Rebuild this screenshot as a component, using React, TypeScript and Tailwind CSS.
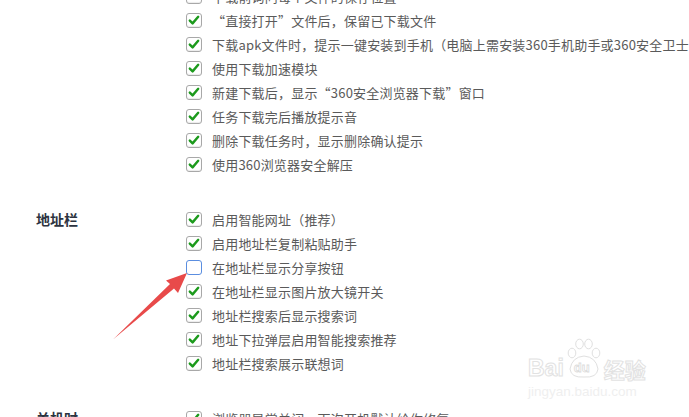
import React from "react";

type Section = {
  title: string;
  options: { label: string; checked: boolean; focus?: boolean }[];
};

const sections: Section[] = [
  {
    title: "",
    options: [
      { label: "下载前询问每个文件的保存位置", checked: false },
      { label: "“直接打开”文件后，保留已下载文件", checked: true },
      {
        label: "下载apk文件时，提示一键安装到手机（电脑上需安装360手机助手或360安全卫士）",
        checked: true,
      },
      { label: "使用下载加速模块", checked: true },
      { label: "新建下载后，显示“360安全浏览器下载”窗口", checked: true },
      { label: "任务下载完后播放提示音", checked: true },
      { label: "删除下载任务时，显示删除确认提示", checked: true },
      { label: "使用360浏览器安全解压", checked: true },
    ],
  },
  {
    title: "地址栏",
    options: [
      { label: "启用智能网址（推荐）", checked: true },
      { label: "启用地址栏复制粘贴助手", checked: true },
      { label: "在地址栏显示分享按钮", checked: false, focus: true },
      { label: "在地址栏显示图片放大镜开关", checked: true },
      { label: "地址栏搜索后显示搜索词", checked: true },
      { label: "地址下拉弹层启用智能搜索推荐", checked: true },
      { label: "地址栏搜索展示联想词", checked: true },
    ],
  },
  {
    title: "关机时",
    options: [{ label: "浏览器异常关闭，下次开机默认给你修复", checked: true }],
  },
];

const CheckBox = ({ checked, focus }: { checked: boolean; focus?: boolean }) => (
  <div
    className={`w-[16px] h-[15px] shrink-0 rounded-[3px] bg-white flex items-center justify-center ${
      focus
        ? "border-[1.5px] border-[#5b8ee0]"
        : "border border-[#a8a8a8] shadow-[inset_0_-1px_1px_rgba(0,0,0,0.08)]"
    }`}
  >
    {checked && (
      <svg width="12" height="11" viewBox="0 0 12 11">
        <path
          d="M1.8 5.6 L4.6 8.4 L10.2 1.8"
          fill="none"
          stroke="#1c9a1c"
          strokeWidth="2.4"
          strokeLinecap="round"
          strokeLinejoin="round"
        />
      </svg>
    )}
  </div>
);

// faint jingyan watermark, bottom right
const Watermark = () => (
  <div className="absolute left-[528px] top-[340px] flex flex-col items-start pointer-events-none select-none">
    <div className="flex items-end h-[40px]">
      <span className="font-['Liberation_Sans'] font-bold text-[23px] leading-none text-white [-webkit-text-stroke:1px_#e2e2e2]">
        Bai
      </span>
      <div className="relative w-[36px] h-[42px] ml-[2px]">
        <svg width="36" height="42" viewBox="0 0 36 42" className="absolute inset-0">
          <g fill="white" stroke="#e0e0e0" strokeWidth="1">
            <ellipse cx="6" cy="15" rx="3.8" ry="4.8" />
            <ellipse cx="13.5" cy="6" rx="3.8" ry="4.8" />
            <ellipse cx="22.5" cy="6" rx="3.8" ry="4.8" />
            <ellipse cx="30" cy="15" rx="3.8" ry="4.8" />
            <path d="M4 31 Q6 19 18 18 Q30 19 32 31 Q31 40 18 39 Q5 40 4 31 Z" />
          </g>
        </svg>
        <span className="absolute left-[8px] top-[23px] font-['Liberation_Sans'] font-bold text-[13px] leading-none text-white [-webkit-text-stroke:0.8px_#dcdcdc]">
          du
        </span>
      </div>
      <span className="ml-[2px] font-['Noto_Sans_CJK_SC',sans-serif] font-bold text-[21px] leading-none text-white [-webkit-text-stroke:1px_#e2e2e2]">
        经验
      </span>
    </div>
    <span className="mt-[5px] font-['Liberation_Sans'] text-[13.5px] leading-none text-[#efefef]">
      jingyan.baidu.com
    </span>
  </div>
);

const Arrow = () => (
  <svg
    className="absolute inset-0 pointer-events-none"
    width="689"
    height="417"
    viewBox="0 0 689 417"
  >
    <polygon
      points="187,273 178,293 174,288.5 113,339.5 170,284 166,280.5"
      fill="#e84a4a"
    />
  </svg>
);

export default function App() {
  return (
    <div className="relative w-[689px] h-[417px] overflow-hidden bg-white font-['Noto_Sans_CJK_SC',sans-serif]">
      <div className="-mt-[16px] flex flex-col gap-[31px]">
        {sections.map((sec, si) => (
          <div key={si} className="flex">
            <div className="w-[186px] shrink-0 pl-[36px] h-[24px] flex items-center">
              <span className="text-[14px] font-bold text-[#2c3340]">{sec.title}</span>
            </div>
            <div className="flex flex-col">
              {sec.options.map((opt, oi) => (
                <div key={oi} className="h-[24px] flex items-center whitespace-nowrap">
                  <CheckBox checked={opt.checked} focus={opt.focus} />
                  <span className="ml-[10px] text-[13px] tracking-[0.2px] text-[#5a5a5a] leading-none">
                    {opt.label}
                  </span>
                </div>
              ))}
            </div>
          </div>
        ))}
      </div>
      <Arrow />
      <Watermark />
    </div>
  );
}
